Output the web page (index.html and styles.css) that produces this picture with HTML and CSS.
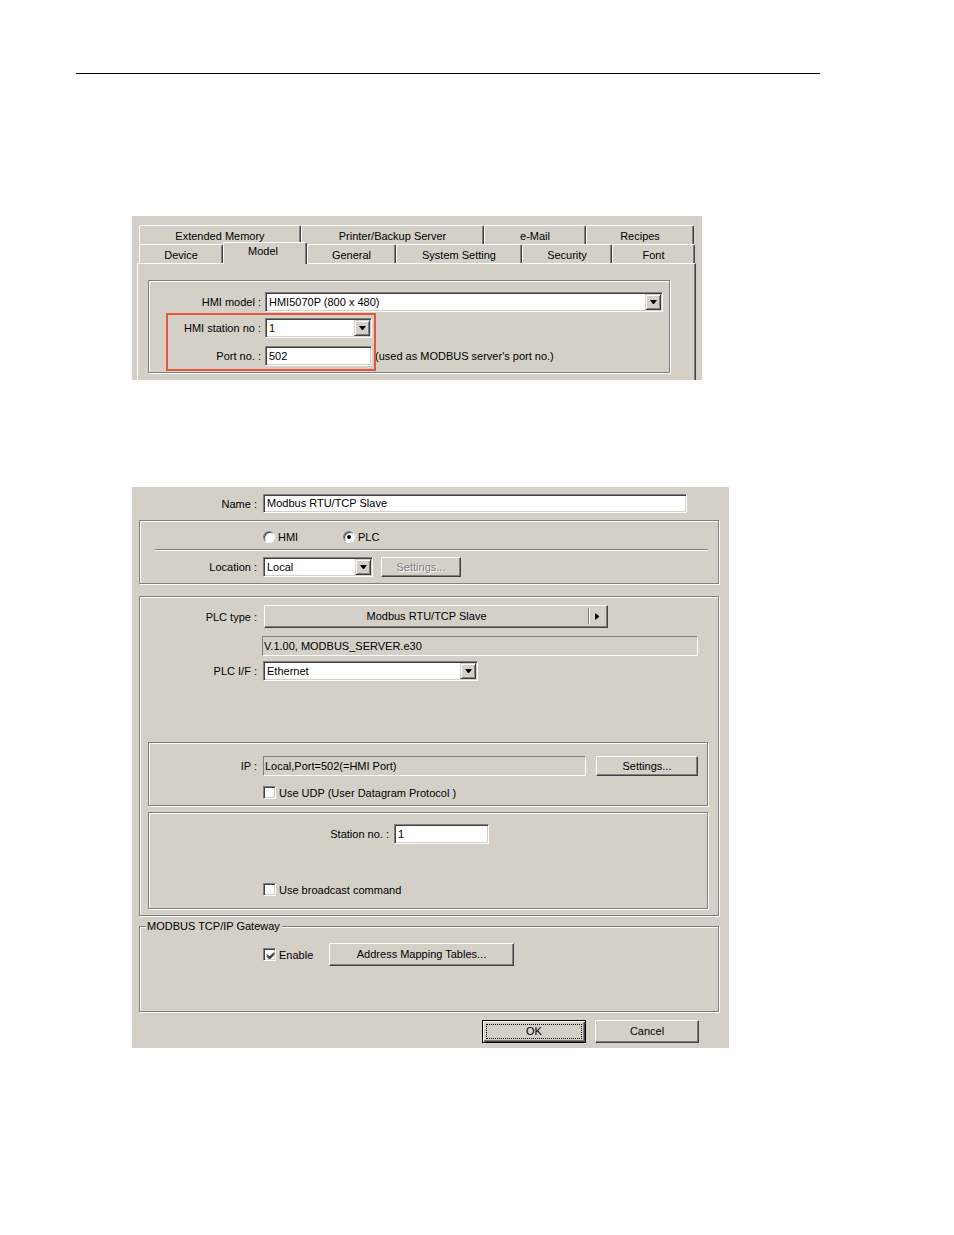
FILE: index.html
```html
<!DOCTYPE html>
<html lang="en">
<head>
    <meta charset="UTF-8">
    <title>Modbus RTU/TCP Slave settings</title>
    <link rel="stylesheet" href="styles.css">
</head>
<body>
    <div class="page">
        <div class="rule"></div>

        <!-- system parameter dialog, Model tab -->
        <div class="dlg dlg-model">
            <div class="tab-row">
                <div class="tab t-ext">Extended Memory</div>
                <div class="tab t-print">Printer/Backup Server</div>
                <div class="tab t-mail">e-Mail</div>
                <div class="tab t-rec">Recipes</div>
            </div>
            <div class="tab-row">
                <div class="tab t-dev">Device</div>
                <div class="tab t-model active">Model</div>
                <div class="tab t-gen">General</div>
                <div class="tab t-sys">System Setting</div>
                <div class="tab t-sec">Security</div>
                <div class="tab t-font">Font</div>
            </div>
            <div class="panel">
                <div class="grp grp-model">
                    <div class="row m-row1">
                        <span class="lbl l-model">HMI model :</span>
                        <div class="field combo w-hmi"><span class="txt">HMI5070P (800 x 480)</span><span class="drop"></span></div>
                    </div>
                    <div class="row m-row2">
                        <span class="lbl l-model">HMI station no :</span>
                        <div class="field combo w-stn"><span class="txt">1</span><span class="drop"></span></div>
                    </div>
                    <div class="row m-row3">
                        <span class="lbl l-model">Port no. :</span>
                        <div class="field w-port">502</div>
                        <span class="note">(used as MODBUS server's port no.)</span>
                    </div>
                </div>
            </div>
            <div class="mark"></div>
        </div>

        <!-- device properties dialog -->
        <div class="dlg dlg-plc">
            <div class="row name-row">
                <span class="lbl l-dlg">Name :</span>
                <div class="field w-name">Modbus RTU/TCP Slave</div>
            </div>

            <div class="grp grp-loc">
                <div class="radios">
                    <span class="opt opt-hmi"><span class="radio"></span>HMI</span>
                    <span class="opt"><span class="radio on"></span>PLC</span>
                </div>
                <div class="sep"></div>
                <div class="row loc-row">
                    <span class="lbl l-grp">Location :</span>
                    <div class="field combo w-loc"><span class="txt">Local</span><span class="drop"></span></div>
                    <div class="btn off w-set1">Settings...</div>
                </div>
            </div>

            <div class="grp grp-plc">
                <div class="row type-row">
                    <span class="lbl l-grp">PLC type :</span>
                    <div class="btn pick w-type">
                        <span class="pick-txt">Modbus RTU/TCP Slave</span>
                        <span class="pick-arrow"></span>
                    </div>
                </div>
                <div class="row ver-row">
                    <div class="field flat w-ver">V.1.00, MODBUS_SERVER.e30</div>
                </div>
                <div class="row if-row">
                    <span class="lbl l-grp">PLC I/F :</span>
                    <div class="field combo w-if"><span class="txt">Ethernet</span><span class="drop"></span></div>
                </div>

                <div class="grp sub sub-ip">
                    <div class="row ip-row">
                        <span class="lbl l-sub">IP :</span>
                        <div class="field flat w-ip">Local,Port=502(=HMI Port)</div>
                        <div class="btn w-set2">Settings...</div>
                    </div>
                    <div class="row chk-row udp-row">
                        <span class="chk"></span>
                        <span class="chk-txt">Use UDP (User Datagram Protocol )</span>
                    </div>
                </div>

                <div class="grp sub sub-stn">
                    <div class="row stn-row">
                        <span class="lbl l-stn">Station no. :</span>
                        <div class="field w-sno">1</div>
                    </div>
                    <div class="row chk-row bc-row">
                        <span class="chk"></span>
                        <span class="chk-txt">Use broadcast command</span>
                    </div>
                </div>
            </div>

            <div class="grp grp-gw">
                <span class="legend">MODBUS TCP/IP Gateway</span>
                <div class="row gw-row">
                    <span class="enable">
                        <span class="chk on">
                            <svg width="9" height="9" viewBox="0 0 9 9"><path d="M1 3.5 L3.5 6 L8 1.5 M1 4.5 L3.5 7 L8 2.5 M1 5.5 L3.5 8 L8 3.5" stroke="#000" stroke-width="1" fill="none"/></svg>
                        </span>
                        <span class="chk-txt">Enable</span>
                    </span>
                    <div class="btn tall w-map">Address Mapping Tables...</div>
                </div>
            </div>

            <div class="actions">
                <div class="btn tall default w-ok"><span class="focus">OK</span></div>
                <div class="btn tall w-cancel">Cancel</div>
            </div>
        </div>
    </div>
</body>
</html>
```

FILE: styles.css
```css
body {
    margin: 0;
    background-color: #fff;
    font-family: "Liberation Sans", Arial, sans-serif;
    font-size: 11px;
    color: #000;
}
.page {
    box-sizing: border-box;
    width: 954px;
    height: 1235px;
    padding-top: 73px;
    overflow: hidden;
}
.rule {
    margin-left: 76px;
    width: 744px;
    border-top: 1px solid #000;
}

/* dialog shells */
.dlg {
    background-color: #d4d0c8;
    margin-left: 132px;
    position: relative;
    overflow: hidden;
    box-sizing: border-box;
}
.dlg-model {
    margin-top: 142px;
    width: 570px;
    height: 164px;
    padding: 9px 0 0 5px;
}
.dlg-plc {
    margin-top: 107px;
    width: 597px;
    height: 561px;
    padding-top: 7px;
}

/* tabs */
.tab-row {
    display: flex;
    height: 19px;
    padding-left: 2px;
}
.tab {
    box-sizing: border-box;
    height: 19px;
    border-top: 1px solid #fff;
    border-left: 1px solid #fff;
    border-right: 1px solid #404040;
    box-shadow: inset -1px 0 0 #808080;
    border-radius: 2px 2px 0 0;
    text-align: center;
    line-height: 20px;
    background-color: #d4d0c8;
}
.t-ext { width: 162px; }
.t-print { width: 183px; }
.t-mail { width: 102px; }
.t-rec { width: 108px; }
.t-dev { width: 84px; }
.t-model { width: 84px; }
.t-gen { width: 89px; }
.t-sys { width: 126px; }
.t-sec { width: 90px; }
.t-font { width: 83px; }
.tab.active {
    position: relative;
    z-index: 1;
    margin-top: -2px;
    height: 22px;
    line-height: 17px;
    padding-right: 4px;
}
.panel {
    box-sizing: border-box;
    width: 559px;
    height: 200px;
    border-top: 1px solid #fff;
    border-left: 1px solid #fff;
    border-right: 1px solid #404040;
    box-shadow: inset -1px 0 0 #808080;
    padding: 16px 0 0 10px;
}

/* group boxes */
.grp {
    box-sizing: border-box;
    border: 1px solid #808080;
    box-shadow: inset 1px 1px 0 #fff, 1px 1px 0 #fff;
}
.grp-model {
    width: 522px;
    height: 93px;
}
.grp-loc {
    margin: 7px 0 0 7px;
    width: 580px;
    height: 64px;
}
.grp-plc {
    margin: 12px 0 0 7px;
    width: 580px;
    height: 320px;
}
.sub {
    margin-left: 8px;
    width: 560px;
}
.sub-ip {
    margin-top: 61px;
    height: 64px;
}
.sub-stn {
    margin-top: 6px;
    height: 97px;
}
.grp-gw {
    position: relative;
    margin: 10px 0 0 7px;
    width: 580px;
    height: 86px;
}
.legend {
    position: absolute;
    top: -7px;
    left: 6px;
    padding: 0 2px 0 1px;
    line-height: 13px;
    background-color: #d4d0c8;
}

/* rows and labels */
.row {
    display: flex;
    align-items: center;
}
.lbl {
    flex: none;
    box-sizing: border-box;
    text-align: right;
    padding-right: 6px;
    white-space: nowrap;
}
.l-model { width: 116px; padding-right: 4px; }
.l-dlg { width: 131px; }
.l-grp { width: 123px; }
.l-sub { width: 114px; }
.l-stn { width: 245px; padding-right: 5px; }

.m-row1 { margin-top: 11px; }
.m-row2 { margin-top: 6px; }
.m-row3 { margin-top: 8px; }
.note { margin-left: 3px; }

.radios {
    display: flex;
    align-items: center;
    height: 14px;
    margin: 9px 0 0 123px;
}
.opt {
    display: flex;
    align-items: center;
}
.opt-hmi { width: 80px; }
.sep {
    margin: 5px 0 0 15px;
    width: 553px;
    border-top: 1px solid #808080;
    border-bottom: 1px solid #fff;
}
.loc-row { margin-top: 6px; }
.type-row { margin-top: 8px; }
.ver-row { margin: 8px 0 0 122px; }
.if-row { margin-top: 5px; }
.ip-row { margin-top: 13px; }
.stn-row { margin-top: 11px; }
.chk-row { margin-left: 114px; }
.udp-row { margin-top: 10px; }
.bc-row { margin-top: 39px; }
.gw-row { margin: 16px 0 0 123px; }
.enable {
    display: flex;
    align-items: center;
    width: 66px;
}

/* fields */
.field {
    flex: none;
    box-sizing: border-box;
    height: 20px;
    background-color: #fff;
    border: 1px solid;
    border-color: #808080 #fff #fff #808080;
    box-shadow: inset 1px 1px 0 #404040, inset -1px -1px 0 #d4d0c8;
    padding: 0 3px;
    line-height: 18px;
    white-space: nowrap;
    overflow: hidden;
}
.field.flat {
    background-color: #d4d0c8;
    box-shadow: none;
    padding-left: 1px;
}
.combo {
    display: flex;
    align-items: center;
    padding: 1px 1px 1px 3px;
}
.combo .txt { flex: 1; }
.drop {
    flex: none;
    box-sizing: border-box;
    width: 16px;
    height: 16px;
    background-color: #d4d0c8;
    border: 1px solid;
    border-color: #d4d0c8 #404040 #404040 #d4d0c8;
    box-shadow: inset 1px 1px 0 #fff, inset -1px -1px 0 #808080;
    display: flex;
    align-items: center;
    justify-content: center;
}
.drop::after {
    content: "";
    width: 1px;
    height: 0;
    border-left: 3px solid transparent;
    border-right: 3px solid transparent;
    border-top: 4px solid #000;
}
.w-hmi { width: 398px; }
.w-stn { width: 107px; }
.w-port { width: 107px; }
.w-name { width: 424px; height: 19px; line-height: 17px; }
.w-loc { width: 110px; }
.w-ver { width: 436px; }
.w-if { width: 215px; }
.w-ip { width: 323px; }
.w-sno { width: 95px; }

/* buttons */
.btn {
    flex: none;
    box-sizing: border-box;
    height: 20px;
    background-color: #d4d0c8;
    border: 1px solid;
    border-color: #fff #404040 #404040 #fff;
    box-shadow: inset -1px -1px 0 #808080;
    text-align: center;
    line-height: 18px;
    white-space: nowrap;
}
.btn.tall {
    height: 23px;
    line-height: 21px;
}
.btn.off {
    color: #808080;
    text-shadow: 1px 1px 0 #fff;
}
.w-set1 { width: 80px; margin-left: 8px; }
.w-set2 { width: 102px; margin-left: 10px; }
.w-map { width: 185px; }
.w-ok, .w-cancel { width: 104px; }
.pick {
    display: flex;
    height: 23px;
    margin-left: 1px;
    line-height: 21px;
}
.w-type { width: 344px; }
.pick-txt { flex: 1; }
.pick-arrow {
    width: 18px;
    border-left: 1px solid #808080;
    box-shadow: inset 1px 0 0 #fff;
    margin: 2px 0 3px;
    display: flex;
    align-items: center;
    justify-content: center;
}
.pick-arrow::after {
    content: "";
    width: 0;
    height: 1px;
    border-top: 3px solid transparent;
    border-bottom: 3px solid transparent;
    border-left: 4px solid #000;
    margin-right: 2px;
}
.btn.default {
    border: 1px solid #000;
    box-shadow: inset 1px 1px 0 #fff, inset -1px -1px 0 #404040, inset -2px -2px 0 #808080;
    padding: 3px;
    line-height: 13px;
}
.focus {
    display: block;
    height: 13px;
    border: 1px dotted #000;
}
.actions {
    display: flex;
    justify-content: flex-end;
    gap: 9px;
    margin-top: 8px;
    padding-right: 30px;
}

/* check boxes and radios */
.chk {
    flex: none;
    box-sizing: border-box;
    width: 13px;
    height: 13px;
    background-color: #fff;
    border: 1px solid;
    border-color: #808080 #fff #fff #808080;
    box-shadow: inset 1px 1px 0 #404040, inset -1px -1px 0 #d4d0c8;
    display: flex;
    align-items: center;
    justify-content: center;
}
.chk svg {
    display: block;
    margin: 1px 0 0 1px;
}
.chk-txt { margin-left: 3px; }
.radio {
    flex: none;
    box-sizing: border-box;
    width: 12px;
    height: 12px;
    margin-right: 3px;
    border-radius: 50%;
    background-color: #fff;
    border: 1px solid;
    border-color: #808080 #fff #fff #808080;
    box-shadow: inset 1px 1px 0 #404040;
    display: flex;
    align-items: center;
    justify-content: center;
}
.radio.on::after {
    content: "";
    width: 4px;
    height: 4px;
    border-radius: 50%;
    background-color: #000;
}

/* red annotation frame */
.mark {
    position: absolute;
    left: 34px;
    top: 97px;
    width: 206px;
    height: 54px;
    border: 2px solid #e8553d;
}
```
